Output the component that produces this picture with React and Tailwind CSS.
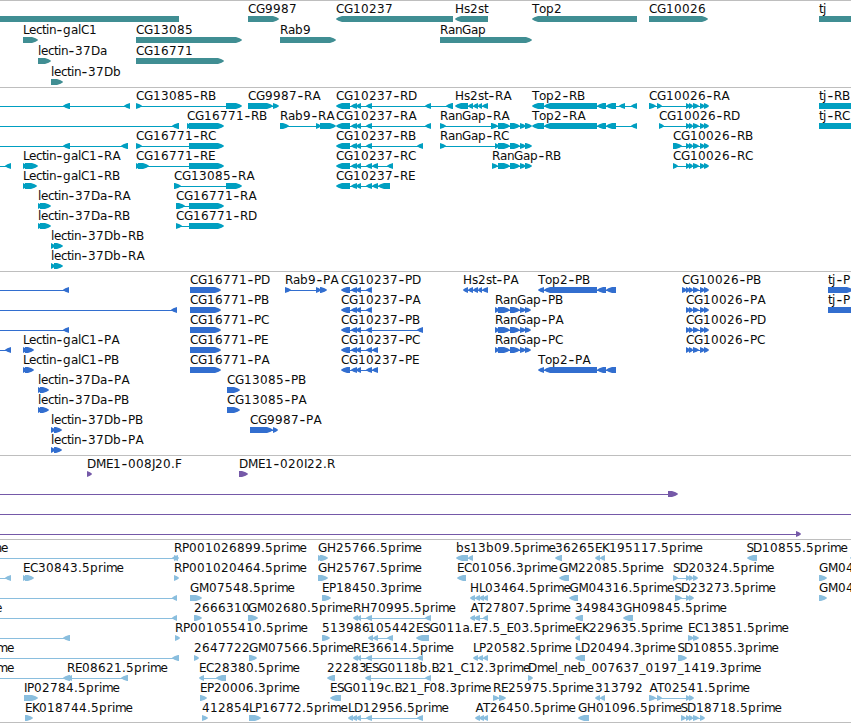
const WIDTH = 851;

// Glyph advances of the label face, in pixels; digits take the default of 8.
const ADVANCE = {
  "-": 7, ".": 4, _: 6,
  A: 8, B: 7, C: 8, D: 9, E: 7, F: 6, G: 9, H: 9, I: 3, J: 3, K: 7, L: 6, M: 10, P: 7, R: 8, S: 6.5, T: 7,
  a: 7, b: 8, c: 6, e: 7, g: 8, i: 3, j: 4, l: 3, m: 10.5, n: 7, o: 7, p: 8, r: 5, s: 6, t: 4,
};

function glyphPositions(text, x) {
  let at = x;
  return [...text]
    .map((ch) => {
      const here = ch === "-" || ch === "A" ? at + 0.5 : at;
      at += ADVANCE[ch] ?? 8;
      return here;
    })
    .join(" ");
}

// Block with a convex arrow tip, 6px tall, pointing right (dir > 0) or left.
function headPath(dir, a, b) {
  const tip = Math.min(6, b - a);
  const tipX = dir > 0 ? b : a;
  const tail = dir > 0 ? a : b;
  const neck = tipX - dir * tip;
  const shoulder = tipX - dir * tip * 0.4;
  return `M${tail} 15H${neck}L${shoulder} 16.2L${tipX} 17.7V18.2L${shoulder} 19.8L${neck} 21H${tail}Z`;
}

// Hyphens are set larger, so that they reach the width of the face's long hyphen.
function Label({ text, x }) {
  return (
    <text x={glyphPositions(text, x)} y={12} className="fill-[#0c0c0c]">
      {text.split(/(-)/).map((part, i) =>
        part === "-" ? (
          <tspan key={i} dy={0.8} className="text-[16px]">
            -
          </tspan>
        ) : (
          <tspan key={i} dy={i > 0 ? -0.8 : 0}>
            {part}
          </tspan>
        ),
      )}
    </text>
  );
}

function Feature({ label, x, dir, blocks }) {
  const start = blocks[0][0];
  const end = blocks[blocks.length - 1][1];
  return (
    <g>
      {blocks.length > 1 && (
        <rect x={start + 1} y={18} width={end - start - 2} height={1} fill="currentColor" shapeRendering="crispEdges" />
      )}
      {blocks.map(([a, b], i) => (
        <path key={i} d={headPath(dir, a, b)} fill="currentColor" />
      ))}
      {label && <Label text={label} x={x} />}
    </g>
  );
}

const R = (label, x, ...blocks) => ({ label, x, dir: 1, blocks });
const L = (label, x, ...blocks) => ({ label, x, dir: -1, blocks });
const OFF = [-30, -20];

const cg10237 = [[336, 350], [351, 357], [356, 361], [366, 372]];
const cg10237p = [[341, 350], [351, 357], [356, 361], [366, 372]];
const cg10026 = [[686, 690], [689, 693], [693, 699], [700, 705], [704, 709]];
const ranGap = [[498, 510], [510, 520], [520, 526], [525, 532]];
const ranGapP = [[495, 499], [498, 510], [510, 520], [520, 526], [525, 531]];
const hs2st = [[468, 473], [473, 478], [478, 482], [482, 488]];
const top2p = [[538, 544], [544, 597], [597, 606], [606, 616]];

const TRACKS = [
  {
    id: "genes",
    className: "h-[87px] text-[#408e93]",
    rowClass: "h-[21px]",
    rows: [
      [
        L("", 0, [-30, 179]), R("CG9987", 248, [248, 279]), L("CG10237", 336, [336, 453]), L("Hs2st", 455, [455, 488]),
        L("Top2", 532, [532, 637]), R("CG10026", 649, [649, 708]), R("tj", 819, [819, 880]),
      ],
      [R("Lectin-galC1", 23, [23, 38]), R("CG13085", 136, [136, 242]), R("Rab9", 280, [280, 336]), R("RanGap", 440, [440, 532])],
      [R("lectin-37Da", 38, [38, 51]), R("CG16771", 136, [136, 224])],
      [R("lectin-37Db", 51, [51, 63])],
    ],
  },
  {
    id: "transcripts",
    className: "h-[184px] text-[#009fc1]",
    rowClass: "h-5",
    rows: [
      [
        L("", 0, OFF, [63, 70], [124, 130]), R("CG13085-RB", 136, [136, 142], [226, 242]), R("CG9987-RA", 248, [248, 273], [273, 279]),
        L("CG10237-RD", 336, ...cg10237, [425, 431], [446, 453]), L("Hs2st-RA", 455, [455, 468], ...hs2st),
        L("Top2-RB", 532, [532, 544], [544, 597], [597, 606], [606, 616], [619, 625], [631, 637]),
        R("CG10026-RA", 649, [649, 656], [657, 662], ...cg10026), R("tj-RB", 819, [819, 880]),
      ],
      [
        L("", 0, OFF, [172, 179]), R("CG16771-RB", 187, [187, 191], [189, 224]), R("Rab9-RA", 280, [280, 289], [316, 321], [320, 336]),
        L("CG10237-RA", 336, ...cg10237, [425, 431]), R("RanGap-RA", 440, [440, 446], [491, 498], ...ranGap),
        L("Top2-RA", 532, [532, 544], [544, 597], [597, 606], [606, 616], [631, 637]),
        R("CG10026-RD", 659, [659, 664], ...cg10026), R("tj-RC", 819, [819, 880]),
      ],
      [
        L("", 0, OFF, [63, 70], [121, 128]), R("CG16771-RC", 136, [136, 142], [189, 224]), L("CG10237-RB", 336, ...cg10237, [417, 423]),
        R("RanGap-RC", 440, [440, 446], [495, 499], ...ranGap), R("CG10026-RB", 673, [673, 682], ...cg10026),
      ],
      [
        L("", 0, OFF, [5, 11]), R("Lectin-galC1-RA", 23, [23, 27], [25, 38]), R("CG16771-RE", 136, [136, 140], [138, 149], [189, 224]),
        L("CG10237-RC", 336, ...cg10237, [372, 378], [387, 393]), R("RanGap-RB", 492, [492, 498], ...ranGap),
        R("CG10026-RC", 673, [673, 678], ...cg10026),
      ],
      [
        R("Lectin-galC1-RB", 23, [23, 27], [25, 37]), R("CG13085-RA", 174, [174, 181], [226, 242]),
        L("CG10237-RE", 336, ...cg10237, [372, 378], [378, 390]),
      ],
      [R("lectin-37Da-RA", 38, [38, 42], [40, 51]), R("CG16771-RA", 176, [176, 185], [189, 224])],
      [R("lectin-37Da-RB", 38, [38, 42], [40, 51]), R("CG16771-RD", 176, [176, 182], [189, 224])],
      [R("lectin-37Db-RB", 51, [51, 55], [54, 63])],
      [R("lectin-37Db-RA", 51, [51, 55], [54, 63])],
    ],
  },
  {
    id: "proteins",
    className: "h-[184px] text-[#326ecf]",
    rowClass: "h-5",
    rows: [
      [
        L("", 0, OFF, [63, 69]), R("CG16771-PD", 190, [190, 221]), R("Rab9-PA", 285, [285, 291], [316, 321], [320, 327]),
        L("CG10237-PD", 341, ...cg10237p), L("Hs2st-PA", 463, [463, 468], ...hs2st), L("Top2-PB", 538, ...top2p),
        R("CG10026-PB", 682, [682, 687], ...cg10026), R("tj-P", 828, [828, 853]),
      ],
      [
        L("", 0, OFF, [171, 177]), R("CG16771-PB", 190, [190, 221]), L("CG10237-PA", 341, ...cg10237p),
        R("RanGap-PB", 495, ...ranGapP), R("CG10026-PA", 686, ...cg10026), R("tj-P", 828, [828, 880]),
      ],
      [
        L("", 0, OFF, [63, 69]), R("CG16771-PC", 190, [190, 221]), L("CG10237-PB", 341, ...cg10237p, [417, 423]),
        R("RanGap-PA", 495, ...ranGapP), R("CG10026-PD", 686, ...cg10026),
      ],
      [
        L("", 0, OFF, [5, 11]), R("Lectin-galC1-PA", 23, [23, 27], [25, 34]), R("CG16771-PE", 190, [190, 221]),
        L("CG10237-PC", 341, ...cg10237p, [372, 378]), R("RanGap-PC", 495, ...ranGapP), R("CG10026-PC", 686, ...cg10026),
      ],
      [
        R("Lectin-galC1-PB", 23, [23, 27], [25, 34]), R("CG16771-PA", 190, [190, 221]),
        L("CG10237-PE", 341, ...cg10237p, [372, 378]), L("Top2-PA", 538, ...top2p),
      ],
      [R("lectin-37Da-PA", 38, [38, 42], [40, 49]), R("CG13085-PB", 227, [227, 240])],
      [R("lectin-37Da-PB", 38, [38, 42], [40, 49]), R("CG13085-PA", 227, [227, 240])],
      [R("lectin-37Db-PB", 51, [51, 55], [54, 62]), R("CG9987-PA", 250, [250, 273], [273, 278])],
      [R("lectin-37Db-PA", 51, [51, 55], [54, 62])],
    ],
  },
  {
    id: "bac-ends",
    className: "h-[84px] text-[#7559a8]",
    rowClass: "h-5",
    rows: [
      [R("DME1-008J20.F", 87, [87, 92]), R("DME1-020I22.R", 239, [239, 248])],
      [R("", 0, OFF, [668, 678])],
      [R("", 0, OFF, [870, 880])],
      [R("", 0, OFF, [796, 801])],
    ],
  },
  {
    id: "ests",
    className: "h-[184px] border-b text-[#8abede]",
    rowClass: "h-5",
    rows: [
      [
        L("me", -9.5, OFF, [172, 178]), R("RP001026899.5prime", 174, [174, 179]), R("GH25766.5prime", 318, [318, 323], [320, 328]),
        L("bs13b09.5prime", 456, [456, 468], [468, 473]), L("36265", 555, [555, 562]), L("EK195117.5prime", 595, [595, 600], [600, 605]),
        L("SD10855.5prime", 746.5, [747, 757]), L("", 0, [850, 860]),
      ],
      [
        L("", 0, OFF, [5, 11]), R("EC30843.5prime", 23, [23, 27], [25, 34]), R("RP001020464.5prime", 174, [174, 179]),
        R("GH25767.5prime", 318, [318, 328]), L("EC01056.3prime", 457, [457, 466]), L("GM22085.5prime", 559, [559, 569]),
        R("SD20324.5prime", 673, [673, 678], [686, 690], [689, 693], [693, 698]), R("GM04", 819, [819, 827]),
      ],
      [
        L("", 0, OFF, [172, 177]), R("GM07548.5prime", 190, [190, 202]), R("EP18450.3prime", 322, [322, 331]),
        L("HL03464.5prime", 470, [470, 475], [475, 480], [479, 484], [483, 488]), L("GM04316.5prime", 569.5, [569, 578]),
        R("SD23273.5prime", 674.5, [675, 682], [686, 690], [689, 694]), R("GM04", 819, [819, 827]),
      ],
      [
        L("e", -5, OFF, [172, 177]), R("2666310", 194, [194, 202]), R("GM02680.5prime", 248, [248, 258]),
        L("RH70995.5prime", 353, [353, 358], [357, 361], [366, 372], [425, 431]), L("AT27807.5prime", 470, [470, 475], [474, 480], [483, 488]),
        L("349843", 575, [575, 583]), L("GH09845.5prime", 623, [623, 633]),
      ],
      [
        L("", 0, OFF, [63, 70]), R("RP001055410.5prime", 175, [175, 180]), R("513986", 322, [322, 330]),
        L("105442", 368, [368, 373], [373, 378], [387, 393]), L("ESG011a.E7.5_E03.5prime", 416, [416, 429]),
        L("EK229635.5prime", 575, [575, 580]), R("EC13851.5prime", 688, [688, 694], [693, 699]),
      ],
      [
        L("me", -3.5, OFF, [172, 179]), R("2647722", 194, [194, 199]), R("GM07566.5prime", 249, [249, 257]),
        L("RE36614.5prime", 353, [353, 358], [357, 361], [366, 372], [417, 423]), L("LP20582.5prime", 473, [473, 478], [478, 483], [483, 488]),
        L("LD20494.3prime", 575, [575, 585]), R("SD10855.3prime", 677.5, [678, 687]),
      ],
      [
        L("me", -3.5, OFF, [63, 70]), L("RE08621.5prime", 67, [67, 72], [121, 128]), L("EC28380.5prime", 199, [199, 204], [216, 226]),
        L("22283", 327, [327, 335]), L("ESG0118b.B21_C12.3prime", 365, [365, 371], [425, 431]),
        R("Dmel_neb_007637_0197_1419.3prime", 528, [528, 533]),
      ],
      [
        R("IP02784.5prime", 24, [24, 38]), R("EP20006.3prime", 200, [200, 207]), L("ESG0119c.B21_F08.3prime", 330, [330, 341]),
        R("RE25975.5prime", 493, [493, 499], [499, 506]), L("313792", 595, [595, 600], [600, 605]),
        R("AT02541.5prime", 649, [649, 656], [657, 662], [686, 690], [689, 694]),
      ],
      [
        R("EK018744.5prime", 25, [25, 33]), R("412854", 202, [202, 208]), R("LP16772.5prime", 249, [249, 261]),
        L("LD12956.5prime", 348, [348, 353], [352, 357], [356, 361], [366, 372], [417, 423]),
        L("AT26450.5prime", 475, [475, 480], [479, 484], [483, 488]), L("GH01096.5prime", 578, [578, 589]),
        R("SD18718.5prime", 680.5, [681, 686], [686, 690], [689, 693], [693, 699], [700, 705]),
      ],
    ],
  },
];

export default function App() {
  return (
    <main className="flex h-[723px] w-[851px] flex-col overflow-hidden bg-white font-['DejaVu_Sans',sans-serif] text-xs">
      {TRACKS.map((track) => (
        <section key={track.id} className={`flex shrink-0 flex-col border-t border-[#bebebe] ${track.className}`}>
          {track.rows.map((row, i) => (
            <svg key={i} width={WIDTH} className={`block shrink-0 overflow-visible ${track.rowClass}`}>
              {row.map((feature, j) => (
                <Feature key={j} {...feature} />
              ))}
            </svg>
          ))}
        </section>
      ))}
    </main>
  );
}
